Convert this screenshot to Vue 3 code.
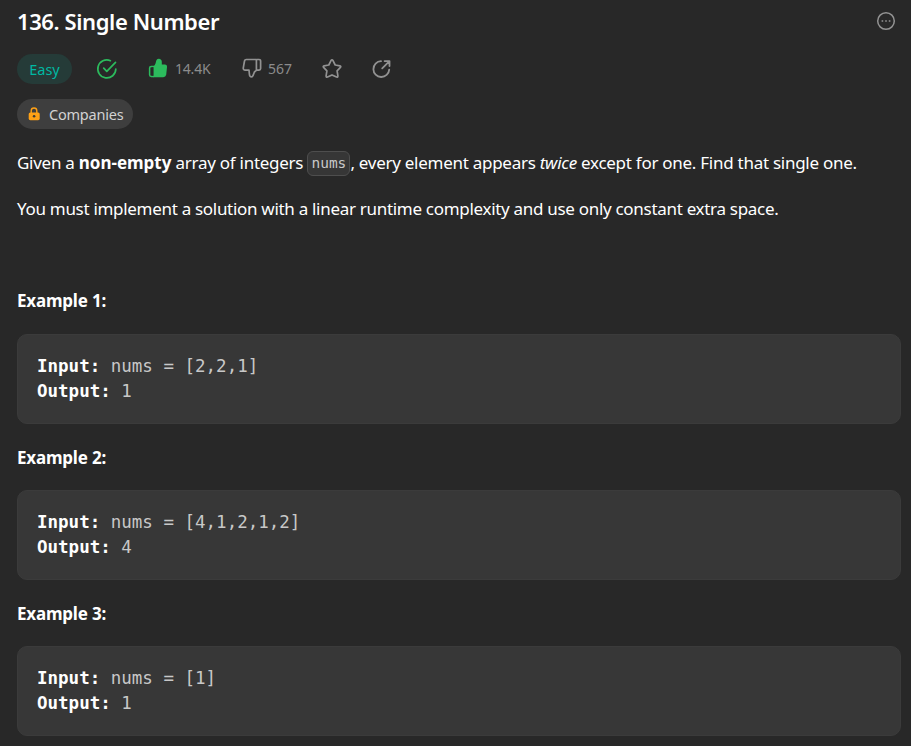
<script setup>
const examples = [
  { input: '[2,2,1]', output: '1' },
  { input: '[4,1,2,1,2]', output: '4' },
  { input: '[1]', output: '1' },
]
</script>

<template>
  <main class="problem">
    <header class="heading">
      <h1>136. Single Number</h1>
      <svg class="more" width="20" height="20" viewBox="0 0 20 20" fill="none" stroke="#929292">
        <circle cx="10" cy="10" r="8.3" stroke-width="1.5" />
        <path d="M5.6 10h1.6M9.2 10h1.6M12.8 10h1.6" stroke-width="1.6" />
      </svg>
    </header>

    <div class="meta">
      <span class="difficulty">Easy</span>
      <svg class="solved" width="22" height="22" viewBox="0 0 22 22" fill="none" stroke="#2cbb5d" stroke-width="1.7" stroke-linecap="round" stroke-linejoin="round">
        <path d="M14.4 2.7A9 9 0 1 0 19.8 11" />
        <path d="M7.7 10.2l3.1 3.1L19.5 4.4" />
      </svg>
      <span class="vote up">
        <svg width="20" height="20" viewBox="0 0 20 20" fill="#2cbb5d">
          <path d="M5.4 8.4Q7 7.2 7.6 5.2L8.2 2.8Q8.8.6 10.8.7Q13.7 1 13.8 3.8V6.6H16.8Q19.3 6.8 19 9.3L18.2 16.8Q17.7 19.2 15.3 19.2H5.4Z" />
          <path d="M6 8.4H3.2Q1.6 8.4 1.6 10V16.8Q1.6 18.4 3.2 18.4H6" fill="none" stroke="#2cbb5d" stroke-width="1.5" />
          <path d="M4.8 9.2V17.7" fill="none" stroke="#282828" stroke-width="1" />
        </svg>
        <span class="up-count">14.4K</span>
      </span>
      <span class="vote down">
        <svg width="20" height="20" viewBox="0 0 20 20" fill="none" stroke="#929292" stroke-width="1.7" stroke-linejoin="round">
          <path d="M14 1.5H4.3Q2.8 1.5 2.5 3L1.3 9.8Q1 12.1 3.3 12.1H7L7.4 16.2Q7.6 18.9 9.5 18.9Q10.6 18.9 11 17.6L12.4 14L14.6 12.1H17Q18.6 12.1 18.6 10.5V3.1Q18.6 1.5 17 1.5H14.4V12.1" />
        </svg>
        <span class="down-count">567</span>
      </span>
      <svg class="star" width="20" height="20" viewBox="0 0 20 20" fill="none" stroke="#929292" stroke-width="1.7" stroke-linejoin="round">
        <path d="M9 1.6Q10 .3 11 1.6L13.2 6L17.9 6.8Q19.4 7.2 18.4 8.4L15.1 11.8L15.9 16.9Q16 18.5 14.5 18L10 15.9L5.5 18Q4 18.5 4.1 16.9L4.9 11.8L1.6 8.4Q.6 7.2 2.1 6.8L6.8 6Z" />
      </svg>
      <svg class="share" width="20" height="20" viewBox="0 0 20 20" fill="none" stroke="#929292" stroke-width="1.8" stroke-linecap="round" stroke-linejoin="round">
        <path d="M9 2.2A7.9 7.9 0 1 0 17.2 10.6" />
        <path d="M12.6 2.1H17.5V7M17 2.6L10.2 9.4" />
      </svg>
    </div>

    <div class="tags">
      <span class="companies">
        <svg width="14" height="16" viewBox="0 0 14 16">
          <path d="M4.2 7V4.8a2.8 2.8 0 0 1 5.6 0V7" fill="none" stroke="#ffa116" stroke-width="1.4" />
          <rect x="1.7" y="6.4" width="11" height="7.8" rx="1.6" fill="#ffa116" />
          <circle cx="7.1" cy="10.2" r="1.3" fill="#3e3b36" />
        </svg>
        <span class="companies-label">Companies</span>
      </span>
    </div>

    <article class="description">
      <p class="statement">Given a <strong>non-empty</strong> array of integers <code>nums</code>, every element appears <em>twice</em> except for one. Find that single one.</p>
      <p class="constraint">You must implement a solution with a linear runtime complexity and use only constant extra space.</p>
      <p>&nbsp;</p>
      <template v-for="(example, index) in examples" :key="index">
        <p class="example-title">Example {{ index + 1 }}:</p>
        <pre><strong>Input:</strong> nums = {{ example.input }}
<strong>Output:</strong> {{ example.output }}</pre>
      </template>
    </article>
  </main>
</template>

<style>
body {
  margin: 0;
  background: #282828;
}
</style>

<style scoped>
.problem {
  box-sizing: border-box;
  height: 746px;
  overflow: hidden;
  padding: 6px 10px 0 17px;
  background: #282828;
  color: #fff;
  font-family: "Segoe UI", "Noto Sans", sans-serif;
}
.heading {
  display: flex;
  height: 32px;
  justify-content: space-between;
  padding-right: 5px;
}
h1 {
  margin: 0;
  font-size: 22px;
  line-height: 30px;
  font-weight: 600;
  letter-spacing: -0.4px;
  white-space: nowrap;
}
.more {
  margin-top: 5px;
}
.meta {
  display: flex;
  align-items: center;
  height: 30px;
  margin-top: 16px;
}
svg {
  display: block;
  flex: none;
}
.difficulty {
  width: 55px;
  height: 30px;
  border-radius: 15px;
  background: #253b38;
  color: #00b8a3;
  font-size: 14.5px;
  line-height: 30px;
  text-align: center;
}
.solved {
  margin-left: 24px;
}
.vote {
  display: flex;
  align-items: center;
  color: #8c8c8c;
  font-size: 14px;
  font-weight: 400;
  line-height: 30px;
}
.up {
  margin-left: 30px;
  width: 63px;
}
.up svg,
.down svg {
  position: relative;
  top: -1px;
}
.up-count {
  margin-left: 7px;
  letter-spacing: -0.2px;
}
.down {
  margin-left: 31px;
  width: 50px;
}
.down-count {
  margin-left: 6px;
}
.star {
  margin-left: 30px;
}
.share {
  margin-left: 30px;
}
.tags {
  display: flex;
  margin-top: 15px;
}
.companies {
  box-sizing: border-box;
  display: flex;
  align-items: center;
  width: 116px;
  height: 30px;
  padding-left: 10px;
  border-radius: 15px;
  background: #3e3e3e;
  color: #d2d2d2;
  font-size: 14.5px;
  line-height: 30px;
}
.companies-label {
  margin-left: 8px;
  letter-spacing: -0.22px;
}
.description {
  margin-top: 21px;
  font-size: 17px;
}
p {
  margin: 0 0 20px;
  line-height: 26px;
  height: 26px;
  white-space: nowrap;
}
.statement {
  letter-spacing: -0.27px;
}
.statement strong {
  letter-spacing: 0;
}
.constraint {
  letter-spacing: -0.3px;
}
.example-title {
  font-weight: 700;
  letter-spacing: -0.2px;
}
pre + .example-title {
  padding-top: 1px;
  height: 25px;
}
code {
  display: inline-block;
  box-sizing: border-box;
  width: 43px;
  height: 25px;
  margin: -3px 0;
  border: 1px solid #4e4e4e;
  border-radius: 6px;
  background: #363636;
  color: #c8c8c8;
  font-family: "DejaVu Sans Mono", monospace;
  font-size: 14.5px;
  line-height: 23px;
  letter-spacing: 0;
  text-align: center;
  vertical-align: 1px;
}
pre {
  box-sizing: border-box;
  height: 90px;
  margin: 0 0 20px;
  padding: 19px;
  border: 1px solid #3b3b3b;
  border-radius: 10px;
  background: #373737;
  color: #c8c8c8;
  font-family: "DejaVu Sans Mono", monospace;
  font-size: 17.5px;
  line-height: 25px;
}
pre strong {
  color: #fff;
}
</style>
